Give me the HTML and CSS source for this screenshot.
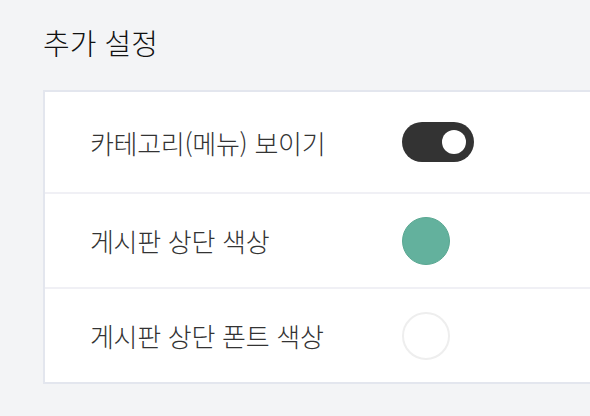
FILE: index.html
```html
<!DOCTYPE html>
<html lang="ko">
<head>
<meta charset="utf-8">
<link rel="stylesheet" href="styles.css">
</head>
<body>
<div class="page">
  <h2 class="title">추가 설정</h2>
  <div class="card">
    <div class="row row-first">
      <span class="label">카테고리(메뉴) 보이기</span>
      <span class="toggle"><span class="knob"></span></span>
    </div>
    <div class="row">
      <span class="label">게시판 상단 색상</span>
      <span class="swatch swatch-green"></span>
    </div>
    <div class="row">
      <span class="label">게시판 상단 폰트 색상</span>
      <span class="swatch swatch-white"></span>
    </div>
  </div>
</div>
</body>
</html>
```
FILE: styles.css
```css
html, body {
  margin: 0;
  padding: 0;
  background: #f3f4f6;
}
body {
  font-family: "Noto Sans CJK KR", "Noto Sans", sans-serif;
}
.page {
  padding: 20px 0 0 43px;
  height: 416px;
  box-sizing: border-box;
  overflow: hidden;
}
.title {
  margin: 0;
  font-size: 29px;
  font-weight: 300;
  line-height: 44px;
  color: #111;
}
.card {
  margin-top: 26px;
  width: 600px;
  background: #fff;
  border: 2px solid #e3e6ee;
  border-right: none;
}
.row {
  display: flex;
  align-items: center;
  height: 93px;
  padding-left: 45px;
  border-top: 2px solid #f0f0f5;
}
.row-first {
  height: 100px;
  border-top: none;
}
.label {
  width: 312px;
  font-size: 26px;
  font-weight: 300;
  color: #333;
  letter-spacing: -0.3px;
}
.toggle {
  display: flex;
  align-items: center;
  justify-content: flex-end;
  width: 72px;
  height: 40px;
  padding-right: 8px;
  box-sizing: border-box;
  border-radius: 20px;
  background: #333;
}
.knob {
  width: 24px;
  height: 24px;
  border-radius: 50%;
  background: #fff;
}
.swatch {
  width: 48px;
  height: 48px;
  border-radius: 50%;
  box-sizing: border-box;
}
.swatch-green {
  background: #63b19d;
  border: 1px solid #5aa892;
}
.swatch-white {
  background: #fff;
  border: 2px solid #eeeeee;
}
```
